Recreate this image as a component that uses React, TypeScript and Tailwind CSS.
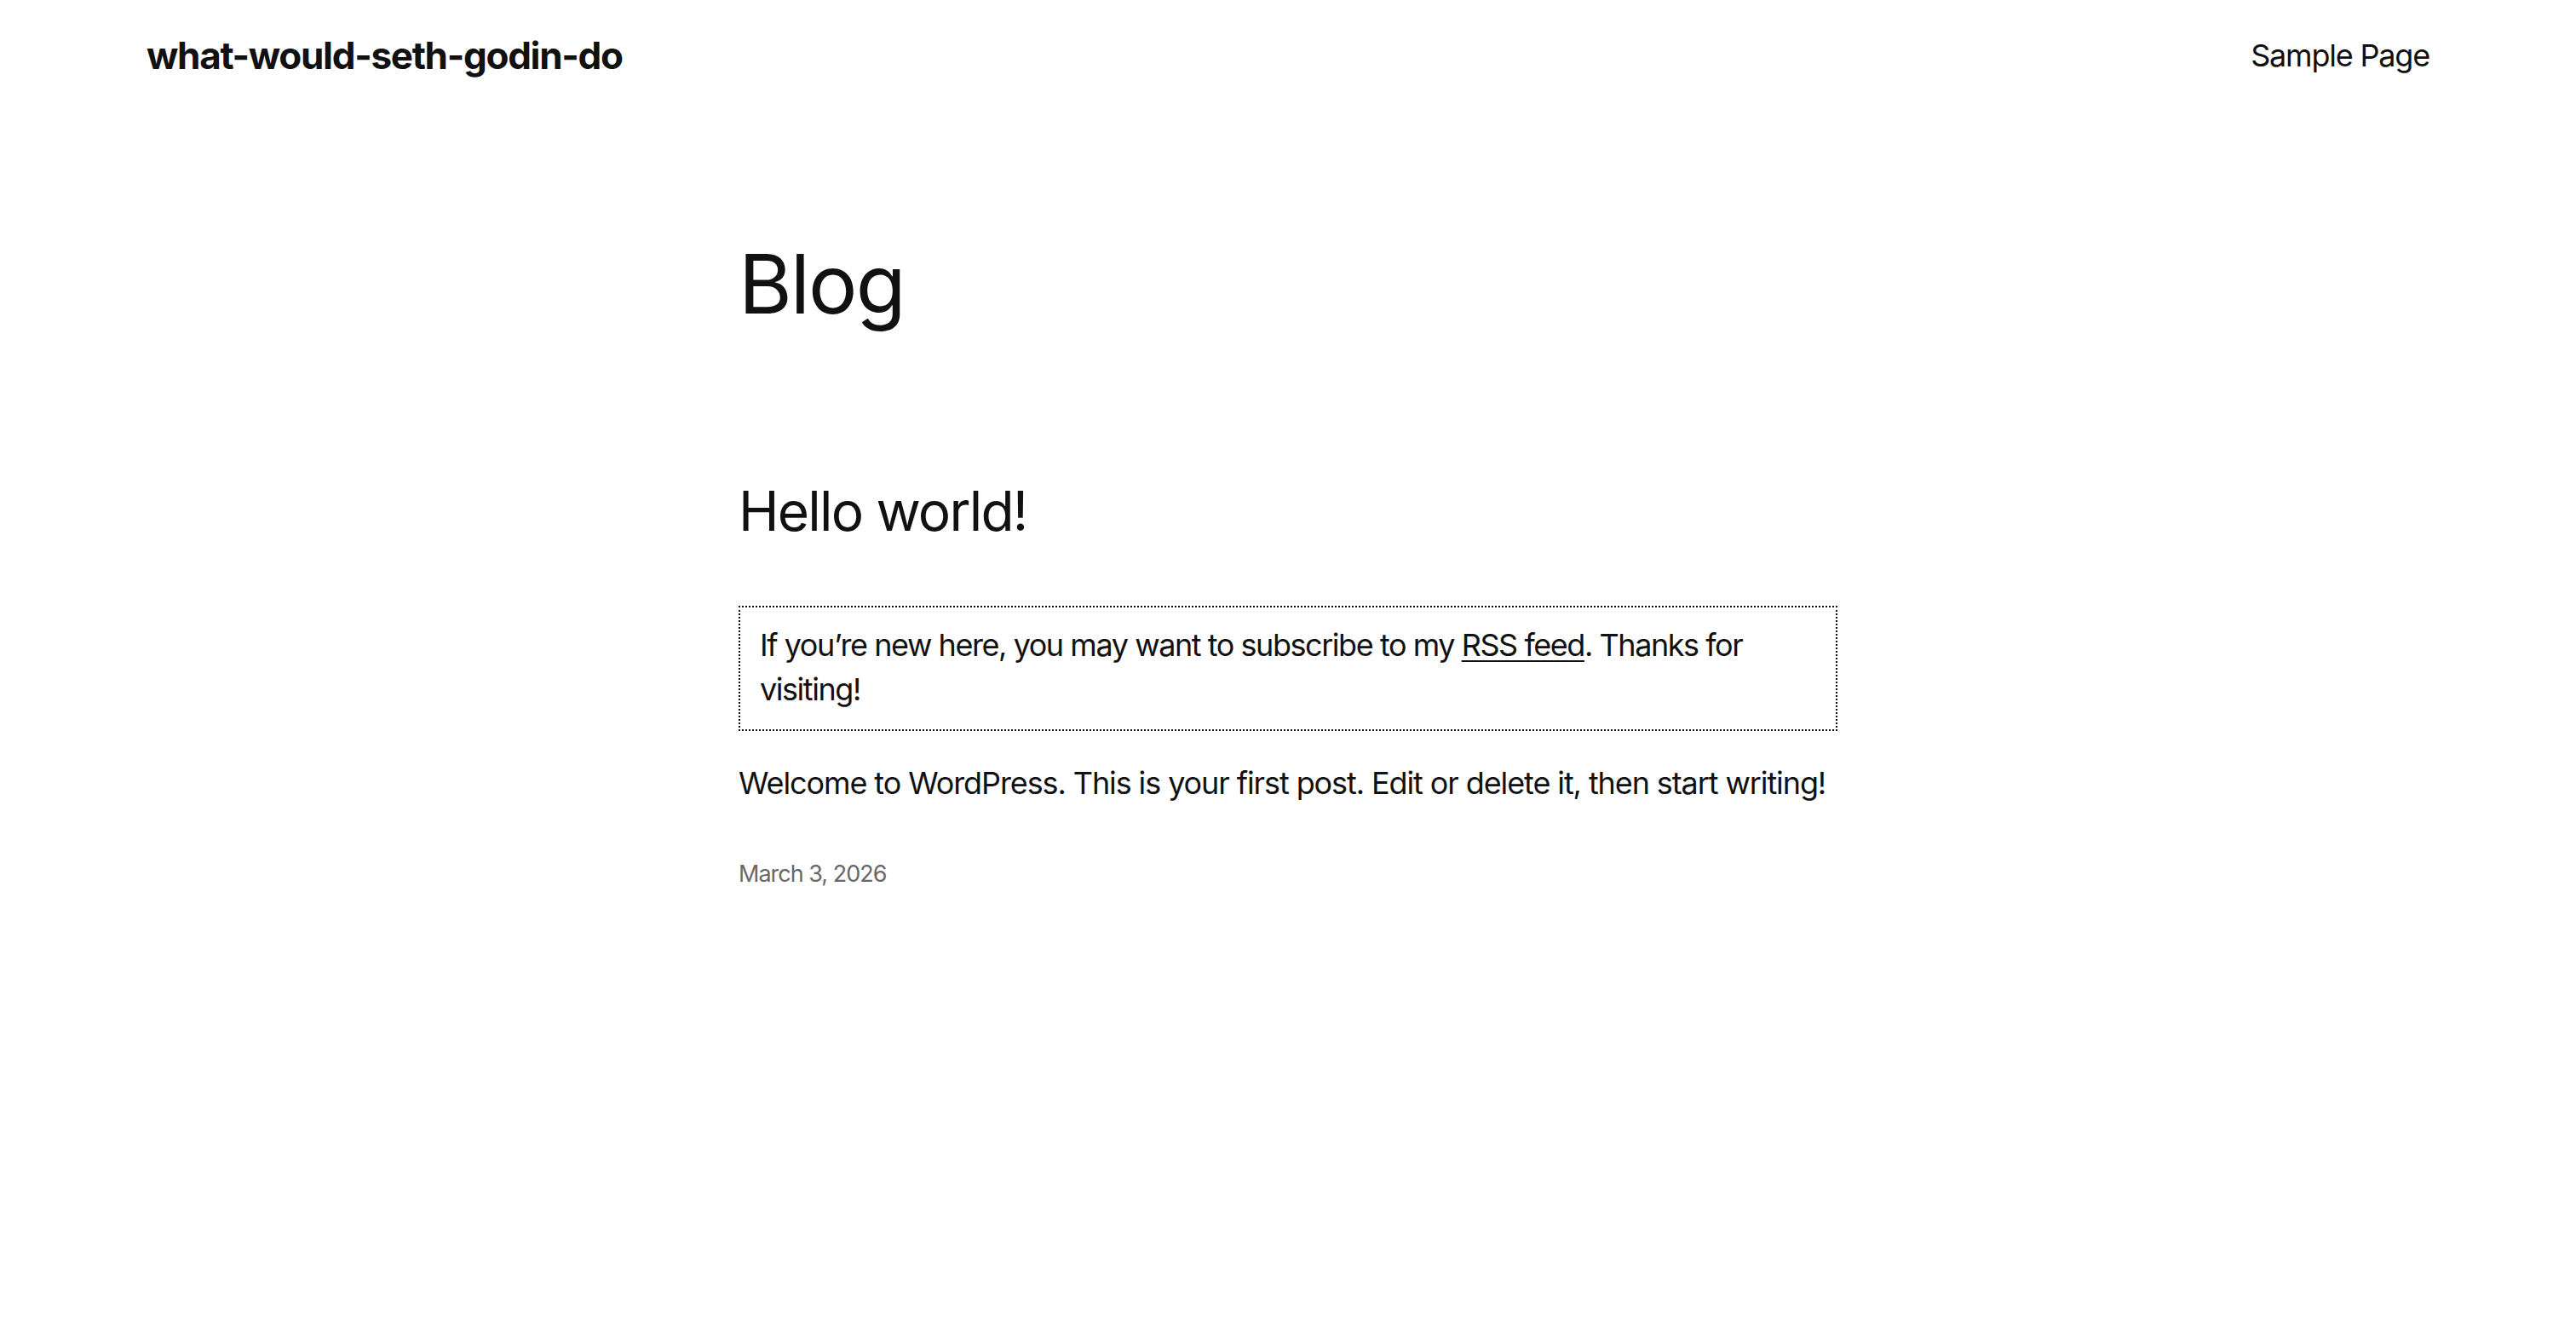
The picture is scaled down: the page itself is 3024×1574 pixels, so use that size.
export default function App() {
  return (
    <div className="min-h-screen bg-white text-[#111111] font-['Inter','Noto_Sans',sans-serif]">
      <header className="flex items-center justify-between px-[172px] pt-[38px]">
        <a href="#" className="text-[44px] font-bold leading-[1.2] tracking-[-1.3px]">
          what-would-seth-godin-do
        </a>
        <nav>
          <a href="#" className="text-[36px] leading-[1.5] tracking-[-1.2px]">
            Sample Page
          </a>
        </nav>
      </header>

      <main className="mx-auto w-[1290px] pt-[193px]">
        <h1 className="text-[96px] font-normal leading-none tracking-[-2px]">Blog</h1>

        <article className="mt-[187px]">
          <h2 className="text-[64px] font-normal leading-none tracking-[-1.8px]">Hello world!</h2>

          <div className="mt-[79px] border-2 border-dotted border-[#111111] px-[23px] pt-[18px] pb-[21px]">
            <p className="text-[36px] leading-[1.45] tracking-[-1.45px]">
              If you’re new here, you may want to subscribe to my{" "}
              <a href="#" className="underline decoration-[2px] underline-offset-[5px]">
                RSS feed
              </a>
              . Thanks for visiting!
            </p>
          </div>

          <p className="mt-[33px] text-[36px] leading-[1.6] tracking-[-1.1px]">
            Welcome to WordPress. This is your first post. Edit or delete it, then start writing!
          </p>

          <p className="mt-[55px] text-[27px] leading-[1.6] tracking-[-1px] text-[#686868]">
            March 3, 2026
          </p>
        </article>
      </main>
    </div>
  );
}
